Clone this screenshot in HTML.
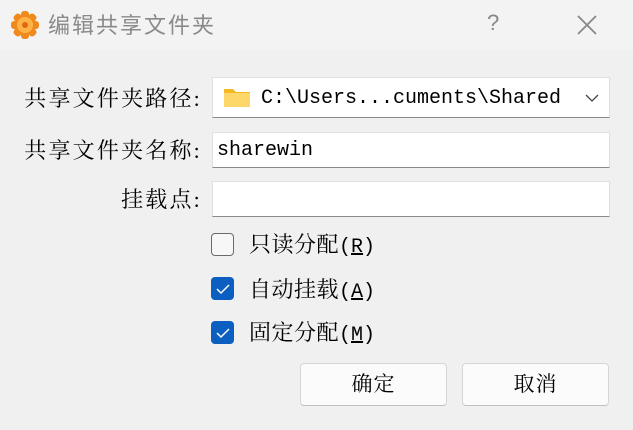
<!DOCTYPE html>
<html><head><meta charset="utf-8"><style>
*{margin:0;padding:0;box-sizing:border-box}
body{width:633px;height:430px;background:#f0f0f0;position:relative;overflow:hidden;font-family:"Liberation Serif","Noto Serif CJK SC",serif;color:#000}
.tb{position:absolute;left:0;top:0;width:633px;height:50px;background:#f3f3f3}
.title{position:absolute;left:48px;top:8px;font-family:"Liberation Sans","Noto Sans CJK SC",sans-serif;font-size:22px;letter-spacing:2px;color:#8a8a8a}
.q{position:absolute;left:487px;top:10px;font-family:"Liberation Sans",sans-serif;font-size:22px;color:#888}
.lbl{position:absolute;right:431px;font-size:22px;letter-spacing:2.2px;line-height:24px}
.box{position:absolute;left:212px;width:398px;background:#fff;border:1px solid #e0e0e0;border-bottom:1px solid #8a8a8a}
.mono{font-family:"Liberation Mono",monospace;font-size:20px;position:absolute}
.cb{position:absolute;left:211px;width:23px;height:23px;border-radius:4px}
.cb.off{border:1.5px solid #6b6b6b;background:#f7f7f7}
.cb.on{background:#0a5fc0}
.ct{position:absolute;left:249px;font-size:22px;letter-spacing:0.5px;line-height:24px}
.ct span{font-family:"Liberation Mono",monospace;letter-spacing:0;font-size:20px}
u{text-decoration:underline}
.btn{position:absolute;top:363px;width:147px;height:43px;background:#fbfbfb;border:1px solid #d6d6d6;border-bottom-color:#c0c0c0;border-radius:4px;font-size:21px;text-align:center;line-height:41px;letter-spacing:1px}
</style></head><body>
<div class="tb"></div>
<svg style="position:absolute;left:9px;top:9px" width="32" height="32" viewBox="0 0 32 32">
<g fill="#f08a1c"><circle cx="16" cy="16" r="11"/>
<g><rect x="12" y="2" width="8" height="8" rx="3"/><rect x="12" y="22" width="8" height="8" rx="3"/><rect x="2" y="12" width="8" height="8" rx="3"/><rect x="22" y="12" width="8" height="8" rx="3"/>
<g transform="rotate(45 16 16)"><rect x="12" y="2" width="8" height="8" rx="3"/><rect x="12" y="22" width="8" height="8" rx="3"/><rect x="2" y="12" width="8" height="8" rx="3"/><rect x="22" y="12" width="8" height="8" rx="3"/></g></g></g>
<circle cx="16" cy="16" r="8" fill="#ffb347"/><circle cx="16" cy="16" r="3" fill="#e06a10"/></svg>
<div class="title">编辑共享文件夹</div>
<div class="q">?</div>
<svg style="position:absolute;left:576px;top:14px" width="22" height="22"><path d="M2 2L20 20M20 2L2 20" stroke="#888" stroke-width="1.8"/></svg>

<div class="lbl" style="top:87px">共享文件夹路径:</div>
<div class="lbl" style="top:139px">共享文件夹名称:</div>
<div class="lbl" style="top:188px">挂载点:</div>

<div class="box" style="top:77px;height:41px">
<svg style="position:absolute;left:10px;top:8px" width="28" height="22"><path d="M1 3h9l3 3h14v15H1z" fill="#f5b724"/><rect x="1" y="7" width="26" height="14" fill="#fdd769"/></svg>
<span class="mono" style="left:48px;top:9px">C:\Users...cuments\Shared</span>
<svg style="position:absolute;left:372px;top:15px" width="14" height="10"><path d="M1 2l6 6 6-6" fill="none" stroke="#444" stroke-width="1.3"/></svg>
</div>
<div class="box" style="top:132px;height:36px"><span class="mono" style="left:4px;top:6px">sharewin</span></div>
<div class="box" style="top:181px;height:36px"></div>

<div class="cb off" style="top:233px"></div>
<div class="ct" style="top:233px">只读分配<span>(<u>R</u>)</span></div>
<div class="cb on" style="top:277px"><svg width="23" height="23"><path d="M6 12l4 4 8-8" fill="none" stroke="#fff" stroke-width="1.5"/></svg></div>
<div class="ct" style="top:278px">自动挂载<span>(<u>A</u>)</span></div>
<div class="cb on" style="top:321px"><svg width="23" height="23"><path d="M6 12l4 4 8-8" fill="none" stroke="#fff" stroke-width="1.5"/></svg></div>
<div class="ct" style="top:321px">固定分配<span>(<u>M</u>)</span></div>

<div class="btn" style="left:300px">确定</div>
<div class="btn" style="left:462px">取消</div>
</body></html>
